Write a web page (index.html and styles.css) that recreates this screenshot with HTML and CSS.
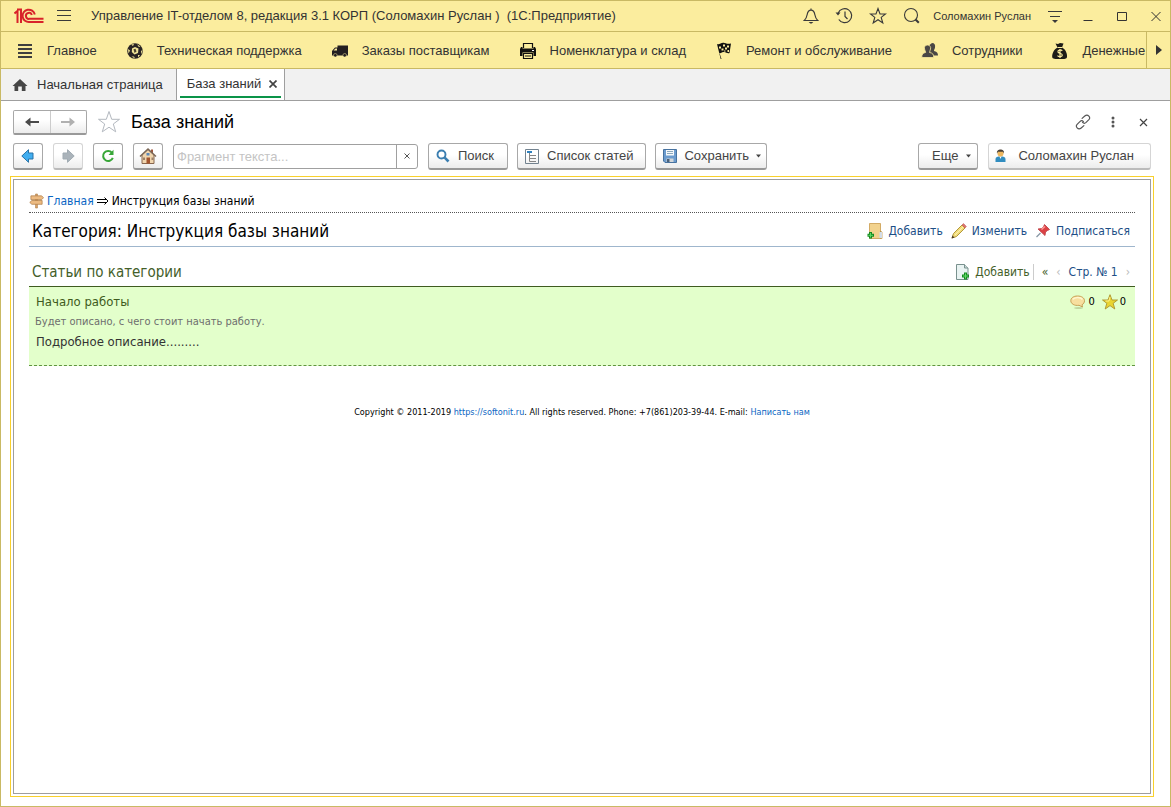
FILE: index.html
```
<!DOCTYPE html>
<html lang="ru">
<head>
<meta charset="utf-8">
<title>База знаний</title>
<link rel="stylesheet" href="styles.css">
</head>
<body>
<div class="window">
  <header class="titlebar">
    <svg class="logo" width="30" height="16" viewBox="0 0 30 16" fill="none" stroke="#d8232a" stroke-width="2">
      <path d="M0.5 5.5 3.500 3V15M3 1.5H7V15"/>
      <path d="M20.800 6.400A6.200 6.200 0 1 0 15.500 14H29.5"/>
      <path d="M17.800 7A3 3 0 1 0 15.500 10.800H29.5"/>
    </svg>
    <button class="icon-btn menu-btn" aria-label="Меню">
      <svg width="15" height="14" viewBox="0 0 15 14" stroke="#3a3a3a" stroke-width="1"><path d="M0 1.5H14M0 6.5H14M0 11.5H14"/></svg>
    </button>
    <span class="app-title">Управление IT-отделом 8, редакция 3.1 КОРП (Соломахин Руслан )&nbsp; (1С:Предприятие)</span>
    <div class="title-tools">
      <button class="icon-btn" aria-label="Уведомления">
        <svg width="16" height="18" viewBox="0 0 16 18" fill="none" stroke="#3a3a3a" stroke-width="1.2"><path d="M1.3 13.5C3.2 12 3.6 10.5 4.200 7.5 4.700 4.5 6 3.200 8 3.200S11.300 4.500 11.800 7.500C12.400 10.500 12.800 12 14.700 13.500ZM8 3V1.500"/><path d="M5.700 15H10.300L8.700 16.500H7.300Z" fill="#3a3a3a" stroke="none"/></svg>
      </button>
      <button class="icon-btn" aria-label="История">
        <svg width="18" height="18" viewBox="0 0 18 18" fill="none" stroke="#3a3a3a" stroke-width="1.200"><path d="M3.200 6A7 7 0 1 1 3.800 12.500M10 4.500V9.500L12.500 12"/><path d="M0.500 5.500H5.500L3 8.500Z" fill="#3a3a3a" stroke="none"/></svg>
      </button>
      <button class="icon-btn" aria-label="Избранное">
        <svg width="18" height="18" viewBox="0 0 18 18" fill="none" stroke="#3a3a3a" stroke-width="1.100"><path d="M9 1.500 11 7H16.500L12.200 10.400 13.800 16 9 12.700 4.200 16 5.800 10.400 1.500 7H7Z"/></svg>
      </button>
      <button class="icon-btn" aria-label="Поиск по программе">
        <svg width="18" height="18" viewBox="0 0 18 18" fill="none" stroke="#3a3a3a"><circle cx="8" cy="8" r="6.500" stroke-width="1.100"/><path d="M12.500 12.500 15.800 15.800" stroke-width="2"/></svg>
      </button>
      <button class="user-btn">Соломахин Руслан</button>
      <button class="icon-btn service-btn" aria-label="Сервис">
        <svg width="16" height="16" viewBox="0 0 16 16"><path d="M1 3.500H15M3 8.500H13" stroke="#3a3a3a"/><path d="M5 12H11L8 15Z" fill="#3a3a3a"/></svg>
      </button>
      <button class="icon-btn win-btn" aria-label="Свернуть"><svg width="10" height="12" viewBox="0 0 10 12" stroke="#333"><path d="M0.500 10.500H9.500"/></svg></button>
      <button class="icon-btn win-btn" aria-label="Развернуть"><svg width="10" height="12" viewBox="0 0 10 12" stroke="#333" fill="none"><path d="M0.500 2.500H9.500V10.500H0.500Z"/></svg></button>
      <button class="icon-btn win-btn" aria-label="Закрыть окно"><svg width="10" height="12" viewBox="0 0 10 12" stroke="#333"><path d="M0.500 2 9.500 11M9.500 2 0.500 11"/></svg></button>
    </div>
  </header>

  <nav class="sections" aria-label="Разделы">
    <div class="section-list">
      <a class="section" href="#"><svg width="18" height="18" viewBox="0 0 18 18" stroke="#3f3f3f" stroke-width="2"><path d="M2 3H16M2 7H16M2 11H16M2 15H16"/></svg>Главное</a>
      <a class="section" href="#"><svg width="18" height="18" viewBox="0 0 18 18"><circle cx="9" cy="9" r="7.800" fill="#292424"/><path d="M6 6.500 9 5 12.500 6.500 12 11 8.500 12.500 5.800 10Z" fill="#f2e598"/><path d="M7.500 7.300 9.500 6.700 10.500 9.500 8.500 11Z" fill="#4a4230"/><path d="M5 2.500 8 2 7 4ZM11 2.300 14.500 4.500 12.800 5ZM2 7 4 8.500 2.500 11.500ZM15 9 16.500 8 15.500 12.500ZM5.500 14.500 8 14.500 9 16.500ZM12 13 14 13 12 15.500Z" fill="#f2e598"/></svg>Техническая поддержка</a>
      <a class="section" href="#"><svg width="18" height="18" viewBox="0 0 18 18"><path d="M6.500 3.500H17V13.500H1V9L4 5.500H6.500Z" fill="#231f20"/><path d="M2.500 8.500 4.500 6.500H6V8.500Z" fill="#fbec9e"/><circle cx="4.300" cy="13.300" r="1.800" fill="#231f20" stroke="#fbec9e" stroke-width=".5"/><circle cx="13.700" cy="13.300" r="1.800" fill="#231f20" stroke="#fbec9e" stroke-width=".5"/></svg>Заказы поставщикам</a>
      <a class="section" href="#"><svg width="18" height="18" viewBox="0 0 18 18"><path d="M4.500 6V1.500H13.500V6" fill="none" stroke="#111" stroke-width="1.200"/><path d="M2 5H3.500V6.500H14.500V5H16L17 7V14H14.500V10.500H3.500V14H1V7Z" fill="#111"/><path d="M4 7H14V9.500H4Z" fill="#111"/><path d="M4.500 11.500H13.500V16.500H4.500ZM6 14H12" fill="none" stroke="#111" stroke-width="1.200"/><path d="M13 8H15V9H13Z" fill="#fff"/></svg>Номенклатура и склад</a>
      <a class="section" href="#"><svg width="18" height="18" viewBox="0 0 18 18"><path d="M2 2C5 3 6 0 9.500 1S13.500 2 16 1.500L14.500 11C12 12 11 9.500 8.500 10S6 11.500 4.500 11L6.500 17H5.700Z" fill="#111"/><path d="M4 4.500H6V6.500H4ZM8 2.500H10V4.500H8ZM12 3.500H14V5.500H12ZM6.500 6.500H8.500V8.500H6.500ZM10 5.500H12V7.500H10ZM12.500 8H14V10H12.500ZM9 8.500H10.500V9.500H9Z" fill="#fbec9e"/></svg>Ремонт и обслуживание</a>
      <a class="section" href="#"><svg width="18" height="18" viewBox="0 0 18 18"><path d="M11 1C13.500 1 14.500 3 14 5.500 13.800 7 13 7.500 13 9 15 9.500 17 10 17 13.500H11L7 8.500 8.500 3Z" fill="#4a4745"/><path d="M6.500 3C9 3 10 5 9.500 7 9.300 8.500 8.600 9 8.600 10.500 11.500 11 12.700 12 12.700 15.500H0.800C0.800 12 2 11 4.600 10.500 4.600 9 3.700 8.500 3.500 7 3 5 4 3 6.500 3Z" fill="#4a4745" stroke="#fbec9e" stroke-width=".8"/></svg>Сотрудники</a>
      <a class="section" href="#"><svg width="18" height="18" viewBox="0 0 18 18"><path d="M4.500 1.500 7 2 9 1 12.500 1.500 11 5.500C14 7 16.500 11 16 15 15.500 17 14 17 9 17S1.500 17 1.200 15C1 11 3.500 7 6.500 5.500Z" fill="#1d1c17"/><path d="M6.500 5.500H11" stroke="#fbec9e"/><path d="M11.300 8.800C9.500 7.300 6.500 8 7 10 7.500 11.500 11 11 11.300 13 11.300 15 8 15.300 6.500 13.700M9 7V16" fill="none" stroke="#fbec9e" stroke-width="1.200"/></svg>Денежные</a>
    </div>
    <button class="scroll-btn" aria-label="Прокрутить разделы"><svg width="6" height="10" viewBox="0 0 6 10"><path d="M0 0 6 5 0 10Z" fill="#333"/></svg></button>
  </nav>

  <div class="tabs">
    <a class="tab home-tab" href="#"><svg width="16" height="14" viewBox="0 0 16 14"><path d="M8 1 15.500 8H13.500V13H9.800V8.500H6.200V13H2.500V8H0.500Z" fill="#464646"/></svg>Начальная страница</a>
    <div class="tab active-tab"><span class="tab-label">База знаний<button class="icon-btn" aria-label="Закрыть вкладку"><svg width="8" height="8" viewBox="0 0 8 8" stroke="#444" stroke-width="1.700"><path d="M0.500 0.500 7.500 7.500M7.500 0.500 0.500 7.500"/></svg></button></span></div>
  </div>

  <main class="form">
    <div class="form-head">
      <div class="nav-pair">
        <button aria-label="Назад"><svg width="14" height="10" viewBox="0 0 14 10"><path d="M5.500 0.500V4H14V6H5.500V9.500L0 5Z" fill="#4a4a4a"/></svg></button>
        <button aria-label="Вперед"><svg width="14" height="10" viewBox="0 0 14 10"><path d="M8.500 0.500V4H0V6H8.500V9.500L14 5Z" fill="#b0b0b0"/></svg></button>
      </div>
      <button class="icon-btn fav-btn" aria-label="В избранное"><svg width="24" height="24" viewBox="0 0 24 24" fill="none" stroke="#b3b8bf"><path d="M12 1.500 14.700 9.300H22.500L16.300 14 18.700 21.800 12 17.200 5.300 21.800 7.700 14 1.500 9.300H9.300Z"/></svg></button>
      <h1 class="form-title">База знаний</h1>
      <div class="form-tools">
        <button class="icon-btn" aria-label="Получить ссылку"><svg width="16" height="16" viewBox="0 0 18 18" fill="none" stroke="#555" stroke-width="1.300" stroke-linecap="round"><path d="M8 5 11 2.300C12.500 1 14.500 1.200 15.600 2.400 16.700 3.600 16.700 5.200 15.600 6.400L12.500 9.500C11.300 10.600 9.500 10.500 8.500 9.500M10 13 7 15.700C5.500 17 3.500 16.800 2.400 15.600 1.300 14.400 1.300 12.800 2.400 11.600L5.500 8.500C6.700 7.400 8.500 7.500 9.500 8.500"/></svg></button>
        <button class="icon-btn" aria-label="Дополнительно"><svg width="4" height="12" viewBox="0 0 4 12" fill="#555"><circle cx="2" cy="2" r="1.500"/><circle cx="2" cy="6" r="1.500"/><circle cx="2" cy="10" r="1.500"/></svg></button>
        <button class="icon-btn" aria-label="Закрыть"><svg width="9" height="9" viewBox="0 0 9 9" stroke="#444" stroke-width="1.200"><path d="M1 1 8 8M8 1 1 8"/></svg></button>
      </div>
    </div>

    <div class="toolbar">
      <button class="btn square" aria-label="Предыдущая"><svg width="14" height="14" viewBox="0 0 14 14"><path d="M7.500 0.700V4H12V10H7.500V13.300L0.800 7Z" fill="#41aef0" stroke="#2873a8"/></svg></button>
      <button class="btn square pale" aria-label="Следующая"><svg width="14" height="14" viewBox="0 0 14 14"><path d="M6.500 0.700V4H2V10H6.500V13.300L13.200 7Z" fill="#aab3ba" stroke="#a0abb2"/></svg></button>
      <button class="btn square" aria-label="Обновить"><svg width="14" height="14" viewBox="0 0 14 14"><path d="M11 3.800A5 5 0 1 0 11.800 8.800" fill="none" stroke="#37a637" stroke-width="2"/><path d="M12.500 0.800V6H7.500Z" fill="#37a637"/></svg></button>
      <button class="btn square" aria-label="Домой"><svg width="18" height="18" viewBox="0 0 18 18"><path d="M12 2.500H14V6H12Z" fill="#a0563c"/><path d="M3 8 9 2.500 15 8V16.500H3Z" fill="#f0d5ae" stroke="#87664e"/><path d="M1 9.500 9 2 17 9.500" fill="none" stroke="#7b6757" stroke-width="1.500"/><path d="M7.500 10.500H11V16.500H7.500Z" fill="#a3552f"/><path d="M7.500 6H10.500V8.500H7.500Z" fill="#5b87b8"/><path d="M12.500 10.500H14.500V13H12.500ZM4 10.500H6V13H4Z" fill="#9c8268"/></svg></button>
      <div class="search-box">
        <input type="text" placeholder="Фрагмент текста..." aria-label="Фрагмент текста">
        <button aria-label="Очистить"><svg width="6" height="6" viewBox="0 0 6 6" stroke="#555"><path d="M0.500 0.500 5.500 5.500M5.500 0.500 0.500 5.500"/></svg></button>
      </div>
      <button class="btn wide"><svg width="14" height="14" viewBox="0 0 14 14" fill="none" stroke="#3b7eb0"><circle cx="5.500" cy="5.500" r="4" stroke-width="1.900"/><path d="M8.700 8.700 12.500 12.500" stroke-width="2.600"/></svg>Поиск</button>
      <button class="btn wide list-btn"><svg width="14" height="15" viewBox="0 0 14 15" fill="none" stroke="#72828f"><path d="M0.500 0.500H13.500V14.500H0.500Z"/><path d="M4.500 3V12.500H11M4.500 6.500H11M4.500 9.500H11" stroke="#858585"/><path d="M2 3H7" stroke="#2e80bd" stroke-width="2"/></svg>Список статей</button>
      <button class="btn wide save-btn"><svg width="14" height="14" viewBox="0 0 14 14"><path d="M0.500 0.500H13.500V13.500H2L0.500 12Z" fill="#6b9bce" stroke="#47729f"/><path d="M3 1H11V6.500H3Z" fill="#f5f8fa"/><path d="M4 2.500H10M4 4.500H10" stroke="#8aa7bd"/><path d="M3.500 9.500H10.500V13H3.500Z" fill="#d2d6d9"/><path d="M4 10H6.500V13H4Z" fill="#4a6078"/></svg>Сохранить<svg width="5" height="4" viewBox="0 0 5 4"><path d="M0 0.500H5L2.500 3.500Z" fill="#444"/></svg></button>
      <button class="btn wide more-btn">Еще<svg width="5" height="4" viewBox="0 0 5 4"><path d="M0 0.500H5L2.500 3.500Z" fill="#444"/></svg></button>
      <button class="btn wide pale person-btn"><svg width="11" height="14" viewBox="0 0 11 14"><path d="M0.500 13V10C0.500 8 2.500 7.500 5.500 7.500S10.500 8 10.500 10V13Z" fill="#318dc0"/><path d="M4.500 7.500 5.500 10 6.500 7.500Z" fill="#fff"/><circle cx="5.500" cy="4.500" r="3" fill="#edb75f"/><path d="M2 4.500C1.500 1.500 3.500 0.500 5.500 0.500S9.500 1.500 9 4.500L8 2.700H3Z" fill="#4a4035"/></svg>Соломахин Руслан</button>
    </div>

    <div class="frame">
      <article class="page">
        <div class="crumbs">
          <svg width="15" height="16" viewBox="0 0 16 16"><path d="M7 0.500H9V15.500H7Z" fill="#dca66c" stroke="#a8763c" stroke-width=".6"/><path d="M2 2.500H13.500L15.500 4.500 13.500 6.500H2Z" fill="#edbb82" stroke="#b07e48" stroke-width=".8"/><path d="M14 7.500H3L0.800 9.500 3 11.500H14Z" fill="#edbb82" stroke="#b07e48" stroke-width=".8"/></svg>
          <a href="#">Главная</a>
          <svg width="12" height="8" viewBox="0 0 12 8" fill="none" stroke="#000"><path d="M0 2.500H9.500M0 5.500H9.500M7.500 0.500 11 4 7.500 7.500"/></svg>
          <span>Инструкция базы знаний</span>
        </div>
        <div class="category">
          <h2>Категория: Инструкция базы знаний</h2>
          <div class="actions">
            <a href="#"><svg width="16" height="16" viewBox="0 0 16 16"><path d="M2.500 0.500H13.500V8L15 9V15.500H2.500Z" fill="#f2d28d" stroke="#c99a4c" stroke-width=".8"/><path d="M13.500 8V15.500" stroke="#ae9256"/><path d="M12.500 9H15V15H12.500Z" fill="#d2dce8"/><path d="M3.500 9V15.500M0.500 12.300H7" stroke="#168a1e" stroke-width="3"/><path d="M3.500 10V14.500M1.300 12.300H6" stroke="#5fd868"/></svg>Добавить</a>
            <a href="#"><svg width="16" height="16" viewBox="0 0 16 16"><path d="M1 15 2.500 10.500 11 2 14 5 5.500 13.500Z" fill="#f1dc7c" stroke="#b39838"/><path d="M4 12 12 4" stroke="#fff2a8"/><path d="M11 2 12.500 0.600 15.300 3.500 14 5Z" fill="#df7772" stroke="#bd5551" stroke-width=".6"/><path d="M0.500 15.500 1.500 12.500 3.500 14.500Z" fill="#4c3b27"/></svg>Изменить</a>
            <a href="#"><svg width="16" height="16" viewBox="0 0 16 16"><path d="M1.500 14 5.500 10" stroke="#8796a4" stroke-width="1.300"/><path d="M9.500 1.500 14.500 6.500 12.500 7.500 10.500 9 10 12.500 3 6 7 5.500 8.700 3.500Z" fill="#dc4144" stroke="#c0444a" stroke-width=".9"/><path d="M6.500 6.500 10 3.500" stroke="#ff9997" stroke-width="1.500"/></svg>Подписаться</a>
          </div>
        </div>
        <section class="articles">
          <div class="articles-head">
            <h3>Статьи по категории</h3>
            <div class="pager">
              <a class="add" href="#"><svg width="16" height="16" viewBox="0 0 16 16"><path d="M1.500 0.500H9.500L13 4V15.500H1.500Z" fill="#e9f3f2" stroke="#79918e"/><path d="M9.500 0.500V4H13" fill="#c8d9d6" stroke="#79918e"/><path d="M10.500 8.500V15.500M7 12H14" stroke="#148b1e" stroke-width="3"/><path d="M10.500 9.500V14.500M8 12H13" stroke="#60db69"/></svg>Добавить</a>
              <a class="first" href="#">«</a><span class="off">‹</span>
              <a class="number" href="#">Стр. № 1</a><span class="off">›</span>
            </div>
          </div>
          <div class="article">
            <div class="article-text">
              <a class="article-title" href="#">Начало работы</a>
              <p class="summary">Будет описано, с чего стоит начать работу.</p>
              <p class="details">Подробное описание.........</p>
            </div>
            <div class="counts">
              <span><svg width="16" height="16" viewBox="0 0 16 16"><ellipse cx="8.500" cy="14" rx="4.500" ry=".8" fill="#b5ca91"/><path d="M7.500 2C11.500 2 14.500 3.900 14.500 6.700 14.500 8.500 13.600 10 12 10.700L12.500 13 9 11.300C4.500 12 0.800 9.800 0.800 6.700 0.800 3.900 3.500 2 7.500 2Z" fill="#f7df9f" stroke="#c2984d" stroke-width=".9"/><path d="M3 5.500C4 3.200 10.500 2.800 12.500 5.500" stroke="#fff7cf" stroke-width="1.500" fill="none"/></svg>0</span>
              <span><svg width="16" height="16" viewBox="0 0 16 16"><path d="M8 0.700 10 6H15.500L11.200 9.300 12.800 15 8 11.600 3.200 15 4.800 9.300 0.500 6H6Z" fill="#e9d431" stroke="#ac922c" stroke-width=".9"/><path d="M8 3 7 7H3.500" stroke="#fff28a" fill="none"/></svg>0</span>
            </div>
          </div>
        </section>
        <footer class="copyright">Copyright © 2011-2019 <a href="#">https://softonit.ru</a>. All rights reserved. Phone: +7(861)203-39-44. E-mail: <a href="#">Написать нам</a></footer>
      </article>
    </div>
  </main>
</div>
</body>
</html>
```
FILE: styles.css
```
* { box-sizing: border-box; }
body { margin: 0; background: #fff; color: #333; font: 13px/16px "Liberation Sans", Arial, sans-serif; }
button, input { font: inherit; color: inherit; }
button { padding: 0; background: none; border: 0; }
a { color: inherit; text-decoration: none; }
svg { display: block; flex: none; }
h1, h2, h3, p { margin: 0; font-weight: normal; }

.window { display: flex; flex-direction: column; min-height: 100vh; border: 1px solid #c9b964; }
.icon-btn { display: flex; align-items: center; justify-content: center; flex: none; }

.titlebar { display: flex; align-items: center; height: 31px; padding: 0 5px 0 13px; background: #fbed9e; border-bottom: 1px solid #c9b964; }
.menu-btn { margin-left: 13px; }
.app-title { margin-left: 19px; white-space: nowrap; }
.title-tools { display: flex; align-items: center; gap: 16px; margin-left: auto; }
.user-btn { margin-left: -4px; font-size: 11px; white-space: nowrap; }
.win-btn { width: 18px; }

.sections { display: flex; height: 37px; background: #fbed9e; border-bottom: 1px solid #c9b964; }
.section-list { display: flex; flex: 1; min-width: 0; overflow: hidden; gap: 29px; padding: 1px 0 0 15px; }
.section { display: flex; align-items: center; gap: 13px; flex: none; white-space: nowrap; }
.scroll-btn { display: flex; align-items: center; justify-content: center; width: 24px; border-left: 1px solid #c9b964; }

.tabs { display: flex; height: 32px; background: #f1f1f1; border-bottom: 1px solid #9f9f9f; }
.tab { display: flex; align-items: center; }
.home-tab { gap: 9px; padding: 0 13px 0 11px; }
.active-tab { align-items: stretch; padding: 0 3px 2px; background: #fff; border: solid #9f9f9f; border-width: 0 1px; }
.tab-label { display: flex; align-items: center; gap: 8px; padding: 3px 4px 0 7px; border-bottom: 2px solid #0a9448; }

.form { display: flex; flex-direction: column; flex: 1; padding: 7px 16px 9px 9px; }
.form-head { display: flex; align-items: center; height: 28px; padding: 0 3px; }
.nav-pair { display: flex; width: 74px; height: 25px; border: 1px solid #a8a8a8; border-bottom: 2px solid #999; border-radius: 2px; background: linear-gradient(#fff 40%, #ececec); }
.nav-pair button { display: flex; flex: 1; align-items: center; justify-content: center; }
.nav-pair button + button { border-left: 1px solid #ccc; }
.fav-btn { margin-left: 10px; }
.form-title { margin-left: 10px; font-size: 18px; line-height: 24px; color: #000; }
.form-tools { display: flex; align-items: center; gap: 14px; height: 24px; margin-left: auto; }
.form-tools .icon-btn { width: 16px; }

.toolbar { display: flex; align-items: center; gap: 10px; height: 40px; padding: 0 3px; }
.btn { display: flex; align-items: center; flex: none; height: 27px; border: 1px solid #a8a8a8; border-bottom: 2px solid #999; border-radius: 3px; background: linear-gradient(#fff 45%, #ececec); color: #444; white-space: nowrap; }
.square { width: 30px; justify-content: center; }
.pale { border-color: #d5d5d5; border-bottom-color: #bbb; }
.wide { gap: 8px; padding: 1px 13px 0 7px; }
.list-btn, .save-btn { margin-left: -1px; }
.list-btn { padding-right: 12px; }
.save-btn { gap: 7px; padding-right: 5px; }
.more-btn { margin-left: auto; padding: 1px 6px 0 13px; }
.person-btn { gap: 12px; padding: 1px 16px 0 6px; }
.search-box { display: flex; flex: 0 1 245px; height: 25px; border: 1px solid #a0a0a0; border-radius: 3px; }
.search-box input { flex: 1; min-width: 0; padding: 1px 3px 0; border: 0; outline: 0; background: none; }
.search-box input::placeholder { color: #c4c4c4; opacity: 1; }
.search-box button { display: flex; align-items: center; justify-content: center; width: 21px; border-left: 1px solid #a0a0a0; }

.frame { display: flex; flex: 1; padding: 2px; border: 1px solid #f8d02c; }
.page { flex: 1; padding: 11px 15px; border: 1px solid #9e9e9e; color: #000; font: 12px/16px "DejaVu Sans Condensed", Tahoma, "Noto Sans", sans-serif; }
.crumbs { display: flex; align-items: center; gap: 3px; height: 22px; padding-bottom: 2px; border-bottom: 1px dotted #555; }
.crumbs a, .copyright a { color: #0b66c3; }
.category { display: flex; align-items: center; justify-content: space-between; height: 34px; padding: 3px 5px 0 3px; border-bottom: 1px solid #9fb6cd; }
.category h2 { font-size: 17px; line-height: 24px; }
.actions { display: flex; gap: 8px; color: #1d4f87; }
.actions a, .pager .add { display: flex; align-items: center; gap: 5px; }
.articles-head { display: flex; align-items: flex-end; justify-content: space-between; height: 40px; padding: 0 5px 4px 3px; border-bottom: 1px solid #3f5b20; color: #44602a; }
.articles-head h3 { font-size: 15px; line-height: 20px; }
.pager { display: flex; align-items: center; gap: 8px; padding-bottom: 2px; }
.pager .add { gap: 4px; padding-right: 3px; border-right: 1px solid #ccc; }
.pager .number { color: #1d4f87; }
.off { color: #bbb; }
.article { display: flex; justify-content: space-between; min-height: 79px; padding: 7px 9px 0 6px; background: #e3ffcb; border-bottom: 1px dashed #609440; }
.article-text { display: flex; flex-direction: column; gap: 4px; font-size: 13px; }
.article-title { padding-left: 1px; color: #3f5b20; }
.summary { font-size: 11px; color: #6e6e6e; }
.details { padding-left: 1px; color: #333; }
.counts { display: flex; gap: 7px; height: 16px; font-size: 11px; }
.counts span { display: flex; gap: 2px; }
.copyright { padding-top: 38px; font-size: 9px; text-align: center; }
```
